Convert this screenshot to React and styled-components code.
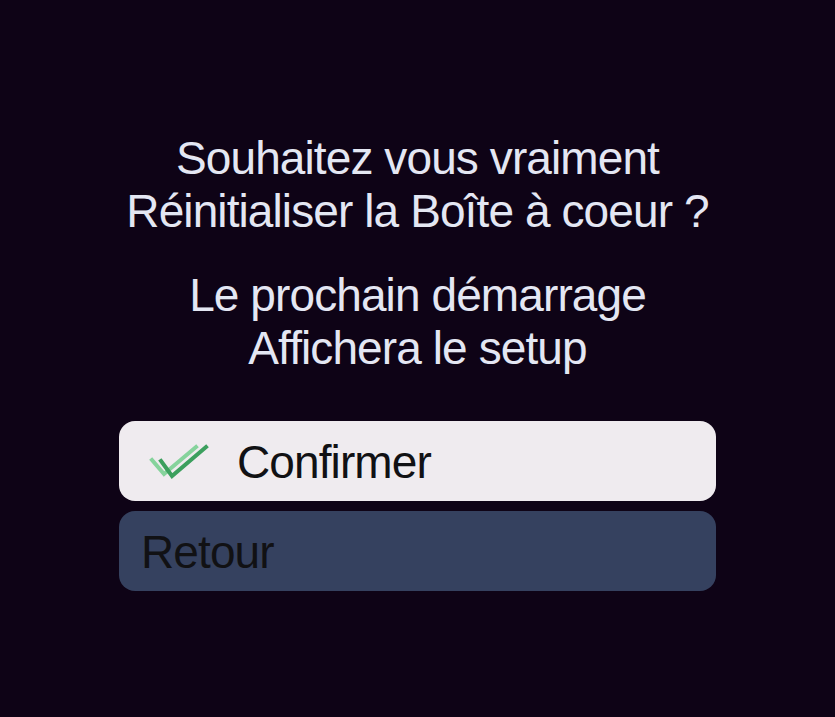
import React from "react";
import styled, { createGlobalStyle } from "styled-components";

const GlobalStyle = createGlobalStyle`
	html, body {
		margin: 0;
		padding: 0;
		background: #0e0316;
	}
	#root {
		min-height: 100vh;
	}
`;

const Screen = styled.div`
	width: 100%;
	min-height: 717px;
	background: #0e0316;
	display: flex;
	justify-content: center;
	font-family: "Liberation Sans", Arial, sans-serif;
`;

const Panel = styled.div`
	width: 597px;
	padding-top: 132px;
	display: flex;
	flex-direction: column;
	align-items: stretch;
`;

const Message = styled.p`
	margin: 0 0 ${(p) => p.$gap || 0}px;
	text-align: center;
	color: #e4e7f3;
	font-size: 46px;
	line-height: 53px;
	letter-spacing: -0.9px;
	white-space: nowrap;
`;

const Actions = styled.div`
	display: flex;
	flex-direction: column;
	gap: 10px;
`;

const Button = styled.button`
	height: 80px;
	border: none;
	border-radius: 16px;
	background: ${(p) => (p.$active ? "#efebef" : "#35415f")};
	color: #111114;
	display: flex;
	align-items: center;
	gap: 28px;
	padding: 0 0 0 ${(p) => (p.$active ? 30 : 22)}px;
	font-family: inherit;
	font-size: 46px;
	line-height: 80px;
	letter-spacing: -0.9px;
	text-align: left;
	cursor: pointer;

	svg {
		margin-top: 6px;
	}

	span {
		padding-top: 2px;
	}
`;

const CheckIcon = () => (
	<svg width="60" height="40" viewBox="0 0 60 40" fill="none">
		<polyline
			points="3,16 15,30 47,3"
			stroke="#86d39c"
			strokeWidth="4"
			strokeLinecap="square"
		/>
		<polyline
			points="12,17 23,32 57,3"
			stroke="#3c9f5e"
			strokeWidth="4"
			strokeLinecap="square"
		/>
	</svg>
);

const App = () => {
	return (
		<Screen>
			<GlobalStyle />
			<Panel>
				<Message $gap={31}>
					Souhaitez vous vraiment
					<br />
					Réinitialiser la Boîte à coeur ?
				</Message>
				<Message $gap={46}>
					Le prochain démarrage
					<br />
					Affichera le setup
				</Message>
				<Actions>
					<Button $active>
						<CheckIcon />
						<span>Confirmer</span>
					</Button>
					<Button>
						<span>Retour</span>
					</Button>
				</Actions>
			</Panel>
		</Screen>
	);
};

export default App;
